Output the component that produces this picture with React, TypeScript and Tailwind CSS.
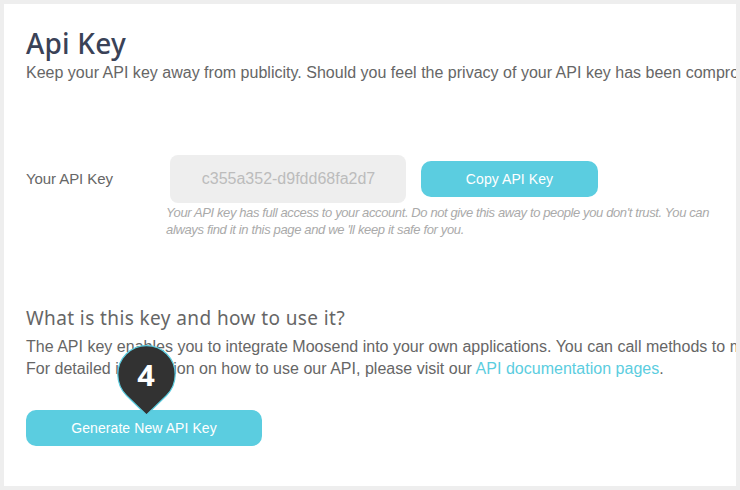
import React from 'react';

const hints = [
  {
    text: "Your API key has full access to your account. Do not give this away to people you don't trust. You can",
    spacing: 'tracking-[-0.39px]'
  },
  {
    text: "always find it in this page and we 'll keep it safe for you.",
    spacing: 'tracking-[-0.35px]'
  }
];

const StepMarker: React.FC<{ step: number }> = ({ step }) => (
  <div className="absolute left-[91px] -top-[65px] w-[59px] h-[71px]">
    <svg className="absolute inset-0" width="59" height="71" viewBox="0 0 59 71">
      <path
        d="M29.5 70L9.5 50.5C4 45 .8 37.5 .8 29.3a28.7 28.7 0 0 1 57.4 0c0 8.2-3.2 15.7-8.7 21.2z"
        fill="#323232"
        stroke="#5bcde0"
        strokeWidth="1.2"
      />
    </svg>
    <span className="relative block pt-[10px] text-center font-['Open_Sans',sans-serif] text-[28px] leading-[40px] font-bold text-white">
      <span className="inline-block scale-x-110">{step}</span>
    </span>
  </div>
);

const App: React.FC = () => {
  return (
    <div className="w-[740px] h-[490px] overflow-hidden border-4 border-[#eeeeee] bg-white pl-[22px] font-['Liberation_Sans',Arial,sans-serif] text-[16px] text-[#666666] whitespace-nowrap">
      <h1 className="pt-[21px] h-[58px] font-['Noto_Sans',sans-serif] text-[28px] leading-[36px] font-medium text-[#3a4257] tracking-[0.2px]">
        Api Key
      </h1>
      <p className="leading-[22px] tracking-[0.01px]">
        Keep your API key away from publicity. Should you feel the privacy of your API key has been compromised
      </p>

      <div className="mt-[71px] flex h-[48px] items-center">
        <div className="w-[144px] text-[15px] tracking-[-0.08px]">Your API Key</div>
        <div className="flex h-[48px] w-[236px] items-center justify-center rounded-[8px] bg-[#eeeeee] pl-[1px] text-[#bcbcbc]">
          c355a352-d9fdd68fa2d7
        </div>
        <button className="ml-[15px] h-[36px] w-[177px] rounded-[10px] bg-[#5bcde0] text-[14px] tracking-[0.08px] text-white">
          Copy API Key
        </button>
      </div>

      <div className="ml-[140px] pt-[1px] text-[13px] leading-[17px] text-[#aaaaaa] italic">
        {hints.map((hint) => (
          <p key={hint.text} className={hint.spacing}>{hint.text}</p>
        ))}
      </div>

      <h2 className="mt-[66px] h-[31px] font-['Noto_Sans',sans-serif] text-[19px] leading-[28px] tracking-[0.4px]">
        What is this key and how to use it?
      </h2>
      <p className="mt-[1px] leading-[22px] tracking-[0.01px]">
        The API key enables you to integrate Moosend into your own applications. You can call methods to manage
      </p>
      <p className="leading-[22px] tracking-[0.02px]">
        For detailed information on how to use our API, please visit our{' '}
        <a className="text-[#5bcde0]">API documentation pages</a>.
      </p>

      <div className="relative mt-[30px]">
        <button className="block h-[36px] w-[236px] rounded-[10px] bg-[#5bcde0] text-[14px] tracking-[0.08px] text-white">
          Generate New API Key
        </button>
        <StepMarker step={4} />
      </div>
    </div>
  );
};

export default App;
